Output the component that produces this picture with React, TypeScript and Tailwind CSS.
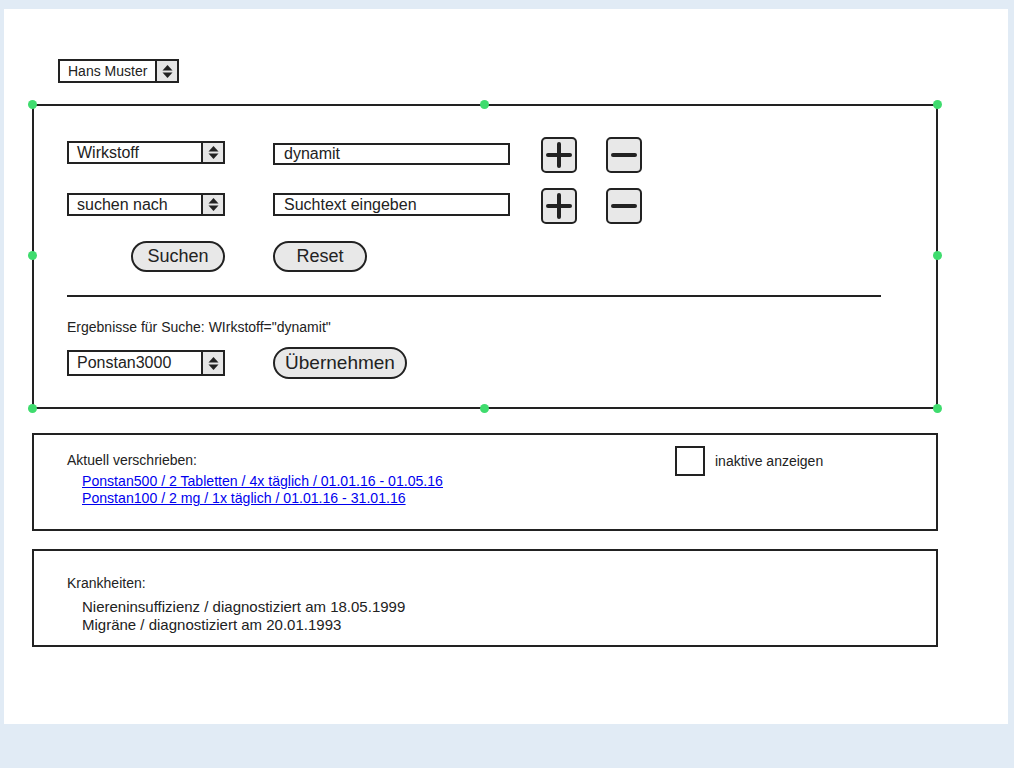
import React from "react";

const font = "font-['Liberation_Sans',Arial,sans-serif]";

function Arrows() {
  return (
    <svg width="11" height="15" viewBox="0 0 11 15">
      <polygon points="0.5,6.5 5.5,1 10.5,6.5" fill="#222" />
      <polygon points="0.5,8.5 10.5,8.5 5.5,14" fill="#222" />
    </svg>
  );
}

function Spinner({
  label,
  className,
  textClass,
}: {
  label: string;
  className: string;
  textClass: string;
}) {
  return (
    <div className={`flex border-2 border-[#222] bg-white ${className}`}>
      <div className={`flex flex-1 items-center text-[#222] ${textClass}`}>
        {label}
      </div>
      <div className="flex w-[22px] items-center justify-center border-l-2 border-[#222] bg-[#e6e6e6]">
        <Arrows />
      </div>
    </div>
  );
}

function TextBox({ value, className }: { value: string; className: string }) {
  return (
    <div
      className={`flex h-[22px] w-[237px] items-center border-2 border-[#222] bg-white pl-[9px] text-[16px] text-[#222] ${className}`}
    >
      {value}
    </div>
  );
}

function IconButton({ kind, className }: { kind: "plus" | "minus"; className: string }) {
  return (
    <div
      className={`flex h-[36px] w-[36px] items-center justify-center rounded-[5px] border-2 border-[#222] bg-[#e8e8e8] ${className}`}
    >
      <svg width="26" height="26" viewBox="0 0 26 26">
        {kind === "plus" && (
          <line x1="13" y1="2" x2="13" y2="24" stroke="#222" strokeWidth="4" strokeLinecap="round" />
        )}
        <line x1="2" y1="13" x2="24" y2="13" stroke="#222" strokeWidth="4" strokeLinecap="round" />
      </svg>
    </div>
  );
}

function PillButton({ label, className }: { label: string; className: string }) {
  return (
    <div
      className={`flex items-center justify-center rounded-full border-2 border-[#222] bg-[#e8e8e8] text-[18px] text-[#222] ${className}`}
    >
      {label}
    </div>
  );
}

function Dot({ className }: { className: string }) {
  return <div className={`absolute h-[9px] w-[9px] rounded-full bg-[#3fdc6e] ${className}`} />;
}

export default function App() {
  return (
    <div className={`min-h-screen bg-[#e1ebf5] pl-[4px] pt-[9px] ${font}`}>
      <div className="h-[715px] w-[1004px] bg-white pl-[28px] pt-[50px]">
        <Spinner
          label="Hans Muster"
          className="ml-[26px] h-[24px] w-[121px]"
          textClass="pl-[8px] text-[14px]"
        />

        {/* search panel */}
        <div className="relative mt-[21px] h-[305px] w-[906px] border-2 border-[#222] pl-[33px] pt-[31px]">
          <Dot className="left-[-6px] top-[-6px]" />
          <Dot className="left-[446px] top-[-6px]" />
          <Dot className="right-[-6px] top-[-6px]" />
          <Dot className="left-[-6px] top-[145px]" />
          <Dot className="right-[-6px] top-[145px]" />
          <Dot className="bottom-[-6px] left-[-6px]" />
          <Dot className="bottom-[-6px] left-[446px]" />
          <Dot className="bottom-[-6px] right-[-6px]" />

          <div className="flex h-[36px] items-start">
            <Spinner
              label="Wirkstoff"
              className="mt-[4px] h-[23px] w-[158px]"
              textClass="pl-[8px] text-[16px]"
            />
            <TextBox value="dynamit" className="ml-[48px] mt-[6px]" />
            <IconButton kind="plus" className="ml-[31px]" />
            <IconButton kind="minus" className="ml-[29px]" />
          </div>

          <div className="mt-[15px] flex h-[36px] items-start">
            <Spinner
              label="suchen nach"
              className="mt-[5px] h-[23px] w-[158px]"
              textClass="pl-[8px] text-[16px]"
            />
            <TextBox value="Suchtext eingeben" className="ml-[48px] mt-[5px] h-[23px]" />
            <IconButton kind="plus" className="ml-[31px]" />
            <IconButton kind="minus" className="ml-[29px]" />
          </div>

          <div className="mt-[17px] flex">
            <PillButton label="Suchen" className="ml-[64px] h-[31px] w-[94px]" />
            <PillButton label="Reset" className="ml-[48px] h-[31px] w-[94px]" />
          </div>

          <div className="mt-[23px] h-[2px] w-[814px] bg-[#222]" />

          <div className="mt-[22px] text-[14px] leading-[17px] text-[#222]">
            Ergebnisse für Suche: WIrkstoff="dynamit"
          </div>

          <div className="mt-[11px] flex items-start">
            <Spinner
              label="Ponstan3000"
              className="mt-[3px] h-[26px] w-[158px]"
              textClass="pl-[8px] text-[16px]"
            />
            <PillButton label="Übernehmen" className="ml-[48px] h-[32px] w-[134px] text-[19px]" />
          </div>
        </div>

        {/* current prescriptions */}
        <div className="mt-[24px] flex h-[98px] w-[906px] items-start border-2 border-[#222] pl-[33px]">
          <div className="w-[608px] pt-[17px] text-[14px] leading-[17px] text-[#222]">
            <div className="mb-[4px]">Aktuell verschrieben:</div>
            <div className="pl-[15px] text-[14.1px]">
              <div className="text-[#0000ee] underline">
                Ponstan500 / 2 Tabletten / 4x täglich / 01.01.16 - 01.05.16
              </div>
              <div className="text-[#0000ee] underline">
                Ponstan100 / 2 mg / 1x täglich / 01.01.16 - 31.01.16
              </div>
            </div>
          </div>
          <div className="mt-[11px] flex items-center">
            <div className="h-[30px] w-[30px] border-2 border-[#222] bg-white" />
            <div className="ml-[10px] text-[14px] text-[#222]">inaktive anzeigen</div>
          </div>
        </div>

        {/* diseases */}
        <div className="mt-[18px] h-[98px] w-[906px] border-2 border-[#222] pl-[33px] pt-[24px] text-[#222]">
          <div className="text-[14px] leading-[17px]">Krankheiten:</div>
          <div className="mt-[6px] pl-[15px] text-[15px] leading-[18px]">
            <div>Niereninsuffizienz / diagnostiziert am 18.05.1999</div>
            <div>Migräne / diagnostiziert am 20.01.1993</div>
          </div>
        </div>
      </div>
    </div>
  );
}
